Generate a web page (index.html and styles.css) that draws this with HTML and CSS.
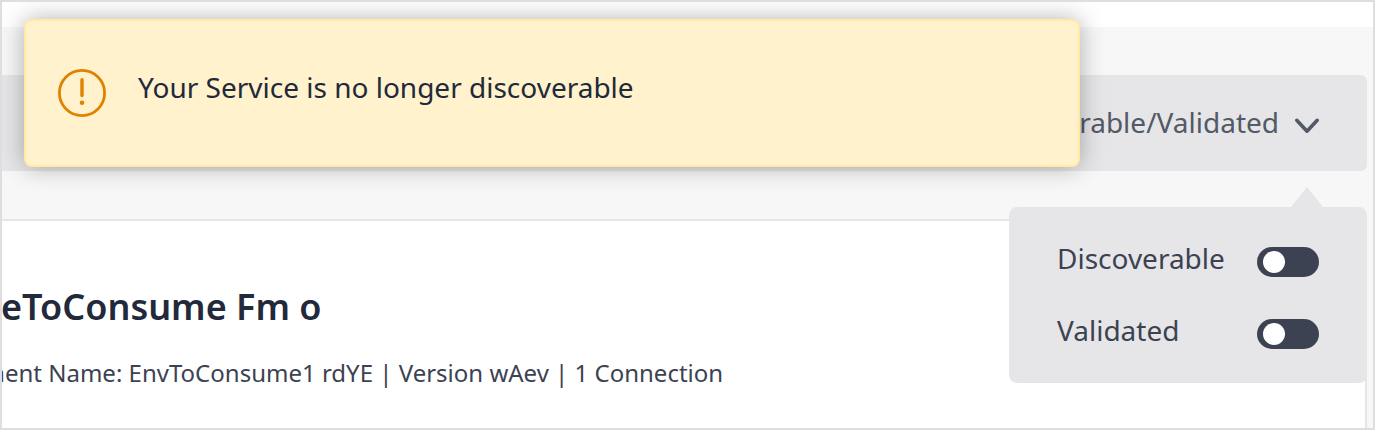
FILE: index.html
```html
<!DOCTYPE html>
<html lang="en">
<head>
<meta charset="utf-8">
<title>Service</title>
<link rel="stylesheet" href="styles.css">
</head>
<body>
<div class="frame">
  <div class="page">
    <header class="toolbar">
      <button class="status" type="button">
        <span class="status-text">rable/Validated</span>
        <svg class="chevron" viewBox="0 0 24 16" width="24" height="16" fill="none"><path d="M1.8 2.3 12 13.2 22.200 2.3" stroke="#535966" stroke-width="3.600" stroke-linecap="round" stroke-linejoin="round"/></svg>
      </button>
    </header>
    <main class="card">
      <h1 class="title">eToConsume Fm o</h1>
      <p class="meta">ment Name: EnvToConsume1 rdYE | Version wAev | 1 Connection</p>
    </main>
  </div>
  <div class="menu">
    <svg class="menu-arrow" viewBox="0 0 32 20" width="32" height="20"><path d="M0 20 16 0 32 20z" fill="#e6e6e8"/></svg>
    <div class="menu-row"><span class="menu-label">Discoverable</span><span class="toggle"></span></div>
    <div class="menu-row"><span class="menu-label">Validated</span><span class="toggle"></span></div>
  </div>
  <div class="toast">
    <svg class="toast-icon" viewBox="0 0 48 48" width="48" height="48" fill="none"><circle cx="24" cy="24" r="22.6" stroke="#e08200" stroke-width="2.800"/><path d="M24 10.700v15.800" stroke="#e08200" stroke-width="3.400" stroke-linecap="round"/><circle cx="24" cy="33.800" r="2.300" fill="#e08200"/></svg>
    <span class="toast-text">Your Service is no longer discoverable</span>
  </div>
</div>
</body>
</html>
```

FILE: styles.css
```css
* { box-sizing: border-box; }

body {
  margin: 0;
  font-family: "Noto Sans", sans-serif;
  font-size: 28px;
  color: #3c4252;
}

.frame {
  position: relative;
  width: 1375px;
  height: 430px;
  border: 2px solid #dedede;
  background: #fff;
  overflow: hidden;
}

.page {
  height: 401px;
  margin-top: 25px;
  padding-right: 6px;
  background: #f7f7f7;
}

.toolbar { padding: 48px 0; }

.status {
  display: flex;
  align-items: center;
  justify-content: flex-end;
  gap: 16px;
  width: 100%;
  height: 96px;
  padding: 0 48px;
  border: 0;
  border-radius: 0 6px 6px 0;
  background: #e6e6e8;
  color: #535966;
  font: inherit;
}

.status-text { margin-bottom: 2px; }

.chevron { margin-top: 5px; }

.card {
  height: 210px;
  padding-top: 62px;
  border-top: 2px solid #e6e6e8;
  border-right: 2px solid #e6e6e8;
  background: #fff;
}

.title {
  margin: 0 0 0 -1px;
  font-size: 36px;
  font-weight: 600;
  line-height: 48px;
  color: #22293a;
}

.meta {
  margin: 26px 0 0 -19.5px;
  font-size: 24px;
  line-height: 32px;
  white-space: nowrap;
}

.menu {
  position: absolute;
  top: 205px;
  right: 6px;
  display: grid;
  grid-template-rows: 48px 48px;
  row-gap: 24px;
  width: 358px;
  height: 176px;
  padding: 28px 48px;
  border-radius: 8px;
  background: #e6e6e8;
}

.menu-arrow {
  position: absolute;
  top: -20px;
  right: 44px;
}

.menu-row {
  display: flex;
  justify-content: space-between;
}

.menu-label { line-height: 46px; }

.toggle {
  width: 62px;
  height: 30px;
  margin-top: 12px;
  padding: 4px 6px;
  border-radius: 15px;
  background: #3c4252;
}

.toggle::before {
  content: "";
  display: block;
  width: 22px;
  height: 22px;
  border-radius: 50%;
  background: #fff;
}

.toast {
  position: absolute;
  top: 17px;
  left: 22px;
  display: flex;
  align-items: flex-start;
  gap: 32px;
  width: 1056px;
  height: 148px;
  padding: 48px 32px;
  border: 2px solid #ffeba6;
  border-radius: 8px;
  background: #fff2cc;
  box-shadow: 0 0 24px rgba(0, 0, 0, 0.3);
}

.toast-text {
  line-height: 36px;
  color: #22293a;
}
```
